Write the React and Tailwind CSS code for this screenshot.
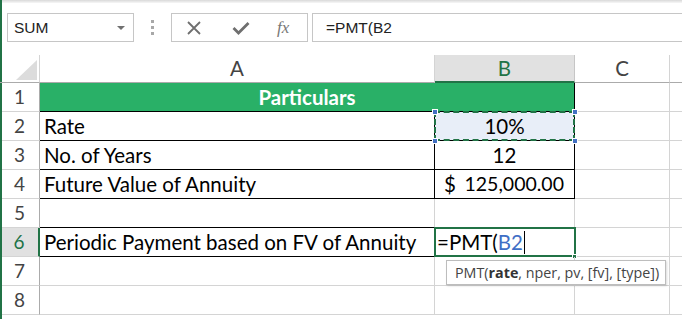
import React from 'react';

const GRID = 'border-[#d4d4d4]';
const cellFont = { fontFamily: 'Lato, "Liberation Sans", sans-serif' };

function RowNum({ n, active }) {
  return (
    <div
      className={
        active
          ? 'flex items-center justify-center bg-[#e1e1e1] text-[#217346] border-r-2 border-r-[#217346] border-b border-b-[#d4d4d4] text-[19px]'
          : 'flex items-center justify-center text-[#444] border-r border-r-[#ababab] border-b border-b-[#d4d4d4] text-[19px]'
      }
    >
      {n}
    </div>
  );
}

function FormulaBar() {
  return (
    <div className="flex items-stretch h-[29px] mt-[10px] ml-[7px] text-[15.5px]" style={{ fontFamily: '"Liberation Sans", Arial, sans-serif' }}>
      <div className="w-[127px] border border-[#c6c6c6] flex items-center justify-between pl-[6px] pr-[8px] text-[#222]">
        <span>SUM</span>
        <span className="w-0 h-0 border-l-[4px] border-r-[4px] border-t-[4px] border-l-transparent border-r-transparent border-t-[#707070]" />
      </div>
      <div className="w-[37px] flex flex-col items-center justify-center gap-[3px]">
        <span className="w-[3px] h-[3px] bg-[#a8a8a8]" />
        <span className="w-[3px] h-[3px] bg-[#a8a8a8]" />
        <span className="w-[3px] h-[3px] bg-[#a8a8a8]" />
      </div>
      <div className="w-[137px] border border-[#c6c6c6] flex items-center pl-[14px]">
        <svg width="16" height="16" viewBox="0 0 16 16">
          <path d="M2 2 L14 14 M14 2 L2 14" stroke="#6f6f6f" strokeWidth="1.8" fill="none" />
        </svg>
        <svg className="ml-[30px]" width="18" height="16" viewBox="0 0 18 16">
          <path d="M1.5 8 L6.5 13 L16.5 3" stroke="#6f6f6f" strokeWidth="2.8" fill="none" strokeLinejoin="miter" />
        </svg>
        <span className="ml-[27px] italic text-[17px] text-[#777]" style={{ fontFamily: '"Liberation Serif", serif' }}>fx</span>
      </div>
      <div className="flex-1 ml-[4px] border border-r-0 border-[#c6c6c6] flex items-center pl-[13px] text-[#222]">
        =PMT(B2
      </div>
    </div>
  );
}

export default function App() {
  return (
    <div className="relative w-[682px] h-[319px] overflow-hidden bg-white">
      <div className="absolute left-0 top-0 bottom-0 w-[2px] bg-[#217346]" />
      <div className="h-[3px] bg-gradient-to-b from-[#d9d9d9] to-[#f7f7f7]" />
      <FormulaBar />
      <div
        className="mt-[13px] grid grid-cols-[40px_395px_140px_95px_12px] grid-rows-[28px_repeat(8,29px)] text-[20.5px] text-black"
        style={cellFont}
      >
        {/* header row */}
        <div className={`relative border-r ${GRID} border-b border-b-[#ababab]`}>
          <svg className="absolute left-[16px] top-[5px]" width="21" height="20" viewBox="0 0 21 20">
            <polygon points="21,0 21,20 0,20" fill="#dcdcdc" />
          </svg>
        </div>
        <div className={`flex items-center justify-center text-[#444] border-r ${GRID} border-b border-b-[#ababab]`}>A</div>
        <div className="flex items-center justify-center bg-[#e1e1e1] text-[#217346] border-r border-r-[#c6c6c6] border-b-2 border-b-[#217346]">B</div>
        <div className={`flex items-center justify-center text-[#444] border-r ${GRID} border-b border-b-[#ababab]`}>C</div>
        <div className="border-b border-b-[#ababab]" />

        {/* row 1 */}
        <RowNum n="1" />
        <div className="col-span-2 flex items-center justify-center bg-[#29b067] text-white font-bold border-r border-b border-black">
          Particulars
        </div>
        <div className={`border-r border-b ${GRID}`} />
        <div className={`border-b ${GRID}`} />

        {/* row 2 */}
        <RowNum n="2" />
        <div className="flex items-center pl-[4px] border-r border-b border-black">Rate</div>
        <div className="relative flex items-center justify-center bg-[#e8eef8] border-r border-b border-black">
          10%
          <div className="absolute -left-px -top-px w-[141px] h-[30px] border-2 border-dashed border-[#217346]" />
          <span className="absolute -left-[3px] -top-[3px] w-[6px] h-[6px] bg-[#4472c4] border border-white" />
          <span className="absolute -right-[4px] -top-[3px] w-[6px] h-[6px] bg-[#4472c4] border border-white" />
          <span className="absolute -left-[3px] -bottom-[4px] w-[6px] h-[6px] bg-[#4472c4] border border-white" />
          <span className="absolute -right-[4px] -bottom-[4px] w-[6px] h-[6px] bg-[#4472c4] border border-white" />
        </div>
        <div className={`border-r border-b ${GRID}`} />
        <div className={`border-b ${GRID}`} />

        {/* row 3 */}
        <RowNum n="3" />
        <div className="flex items-center pl-[4px] border-r border-b border-black">No. of Years</div>
        <div className="flex items-center justify-center border-r border-b border-black">12</div>
        <div className={`border-r border-b ${GRID}`} />
        <div className={`border-b ${GRID}`} />

        {/* row 4 */}
        <RowNum n="4" />
        <div className="flex items-center pl-[4px] border-r border-b border-black">Future Value of Annuity</div>
        <div className="flex items-center justify-between pl-[9px] pr-[10px] border-r border-b border-black">
          <span>$</span>
          <span className="text-[19.5px]">125,000.00</span>
        </div>
        <div className={`border-r border-b ${GRID}`} />
        <div className={`border-b ${GRID}`} />

        {/* row 5 */}
        <RowNum n="5" />
        <div className={`border-r ${GRID} border-b border-b-black`} />
        <div className={`border-r border-b ${GRID}`} />
        <div className={`border-r border-b ${GRID}`} />
        <div className={`border-b ${GRID}`} />

        {/* row 6 */}
        <RowNum n="6" active />
        <div className="flex items-center pl-[4px] border-r border-b border-black">Periodic Payment based on FV of Annuity</div>
        <div className={`relative flex items-center pl-[2px] border-r border-b ${GRID}`}>
          <span>=PMT(</span>
          <span className="text-[#3f6fc6]">B2</span>
          <span className="ml-[1px] w-px h-[23px] bg-black" />
          <div className="absolute -left-px -top-px w-[142px] h-[30px] border-2 border-[#217346]" />
          <span className="absolute -right-[3px] -bottom-[3px] w-[5px] h-[5px] bg-[#217346] border border-white" />
        </div>
        <div className={`border-r border-b ${GRID}`} />
        <div className={`border-b ${GRID}`} />

        {/* row 7 */}
        <RowNum n="7" />
        <div className={`border-r border-b ${GRID}`} />
        <div className={`relative border-r border-b ${GRID}`}>
          <div
            className="absolute left-[11px] top-[3px] z-10 w-[220px] h-[25px] bg-white border border-[#bdbdbd] shadow-[1px_1px_2px_rgba(0,0,0,0.15)] flex items-center pl-[8px] text-[14.3px] text-[#444] whitespace-nowrap"
            style={{ fontFamily: '"Open Sans", "Liberation Sans", sans-serif' }}
          >
            PMT(<b className="font-bold text-[#333]">rate</b>, nper, pv, [fv], [type])
          </div>
        </div>
        <div className={`border-r border-b ${GRID}`} />
        <div className={`border-b ${GRID}`} />

        {/* row 8 */}
        <RowNum n="8" />
        <div className={`border-r border-b ${GRID}`} />
        <div className={`border-r border-b ${GRID}`} />
        <div className={`border-r border-b ${GRID}`} />
        <div className={`border-b ${GRID}`} />
      </div>
    </div>
  );
}
